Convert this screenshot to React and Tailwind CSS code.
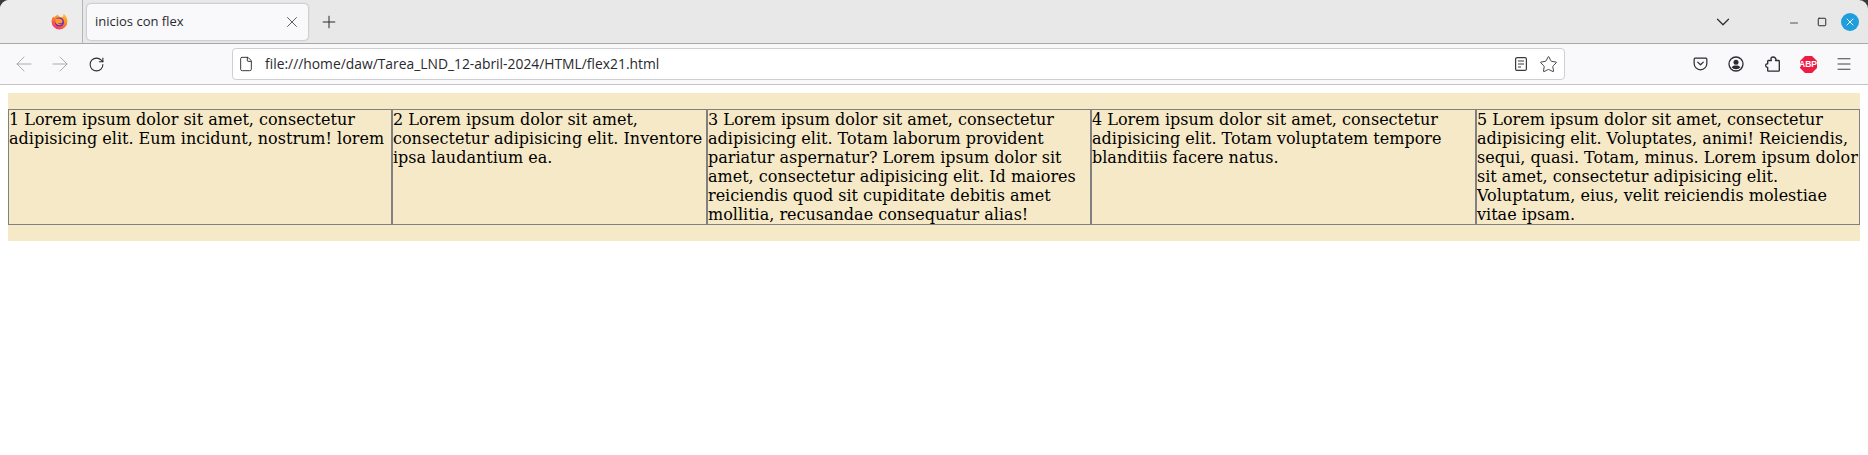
import { ArrowLeft, ArrowRight, RotateCw, X, Plus, ChevronDown, Minus, Square, File, Star, Menu } from "lucide-react";

const CELLS = [
  { w: "w-[384px]", text: "1 Lorem ipsum dolor sit amet, consectetur adipisicing elit. Eum incidunt, nostrum! lorem" },
  { w: "w-[315px]", text: "2 Lorem ipsum dolor sit amet, consectetur adipisicing elit. Inventore ipsa laudantium ea." },
  { w: "w-[384px]", text: "3 Lorem ipsum dolor sit amet, consectetur adipisicing elit. Totam laborum provident pariatur aspernatur? Lorem ipsum dolor sit amet, consectetur adipisicing elit. Id maiores reiciendis quod sit cupiditate debitis amet mollitia, recusandae consequatur alias!" },
  { w: "w-[385px]", text: "4 Lorem ipsum dolor sit amet, consectetur adipisicing elit. Totam voluptatem tempore blanditiis facere natus." },
  { w: "w-[384px]", text: "5 Lorem ipsum dolor sit amet, consectetur adipisicing elit. Voluptates, animi! Reiciendis, sequi, quasi. Totam, minus. Lorem ipsum dolor sit amet, consectetur adipisicing elit. Voluptatum, eius, velit reiciendis molestiae vitae ipsam." },
];

function FirefoxLogo() {
  return (
    <svg width="17" height="17" viewBox="0 0 17 17">
      <defs>
        <linearGradient id="fx" x1="0.8" y1="0" x2="0.2" y2="1">
          <stop offset="0" stopColor="#ffc530" />
          <stop offset="0.5" stopColor="#ff7a2a" />
          <stop offset="1" stopColor="#f0287a" />
        </linearGradient>
      </defs>
      <path d="M12.5 .8c1.6 1.3 3.9 3.4 3.9 7.6a7.9 7.9 0 0 1-15.8.3C.6 6.5 1.2 4.6 2.4 3.4l.7 1.3C4 3.4 5.4 2.2 7.3 1.4c-.4 1.3.4 2 1.7 2.4 1.6.4 3.6 1 3.5-3z" fill="url(#fx)" />
      <circle cx="8.4" cy="9" r="4.6" fill="#6a2bc4" />
      <path d="M4.4 6.2c1.7-.9 4.6-1.1 6.3.2 1.2 1 1.2 3-.2 3.7-1 .5-2.3.2-3.6-.2.8 1.2 2.7 1.7 4.2.7-.8 1.7-3.1 2.1-4.8 1C4.4 10.4 3.6 8 4.4 6.2z" fill="#ff9a2e" />
    </svg>
  );
}

function ReaderIcon() {
  return (
    <svg width="14" height="16" viewBox="0 0 14 16" fill="none" stroke="#3a3a40" strokeWidth="1.2">
      <rect x="1.6" y="1.6" width="10.8" height="12.8" rx="1.5" />
      <path d="M4 5h6M4 8h6M4 11h3" />
    </svg>
  );
}

function PocketIcon() {
  return (
    <svg width="15" height="14" viewBox="0 0 16 15" fill="none" stroke="#2b2b30" strokeWidth="1.3">
      <path d="M2.3 1.2h11.4c.7 0 1.1.4 1.1 1.1v4.6a6.8 6.8 0 0 1-13.6 0V2.3c0-.7.4-1.1 1.1-1.1z" />
      <path d="M5 5.5l3 2.8 3-2.8" strokeLinecap="round" strokeLinejoin="round" />
    </svg>
  );
}

function AccountIcon() {
  return (
    <svg width="16" height="16" viewBox="0 0 16 16">
      <circle cx="8" cy="8" r="7" fill="none" stroke="#2b2b30" strokeWidth="1.3" />
      <circle cx="8" cy="6.2" r="2.5" fill="#2b2b30" />
      <path d="M3.6 11.2c1-1.3 2.6-1.7 4.4-1.7s3.4.4 4.4 1.7c-1 1.2-2.6 2-4.4 2s-3.4-.8-4.4-2z" fill="#2b2b30" />
    </svg>
  );
}

function ExtensionIcon() {
  return (
    <svg width="15" height="16" viewBox="0 0 15 16" fill="none" stroke="#2b2b30" strokeWidth="1.3" strokeLinejoin="round">
      <path d="M8 1c-1.2 0-2 .9-2 2 0 .6.2 1 .4 1.5H3.500a.8.8 0 0 0-.8.8v2.500H2C1 7.800.7 8.700.7 9.500S1.300 11.300 2.200 11.300h.5v3.200c0 .3.200.6.600.6h10.300c.4 0 .7-.3.700-.7V5.300a.8.800 0 0 0-.8-.8h-3c.3-.5.5-.9.500-1.500C10.500 1.900 9.300 1 8 1z" />
    </svg>
  );
}

function AbpBadge() {
  return (
    <div className="relative flex h-[17px] w-[17px] items-center justify-center">
      <svg width="17" height="17" viewBox="0 0 17 17" className="absolute inset-0">
        <path d="M5 0h7l5 5v7l-5 5H5l-5-5V5z" fill="#ee1b44" />
      </svg>
      <span className="relative text-[8.5px] font-bold leading-none text-white font-['Liberation_Sans',sans-serif]">ABP</span>
    </div>
  );
}

function ToolSlot({ children }) {
  return <div className="flex w-[36px] items-center justify-center">{children}</div>;
}

function TabStrip() {
  return (
    <div className="flex h-[43px] items-stretch rounded-t-[9px] bg-[#e8e8e8]">
      <div className="flex w-[83px] items-center justify-end rounded-tl-[9px] border-r border-[#b5b5b5] bg-[#ececec] pr-[14px]">
        <FirefoxLogo />
      </div>
      <div className="ml-[4px] mt-[4px] flex h-[36px] w-[221px] items-center justify-between rounded-[4px] bg-[#f9f9fb] pl-[8px] pr-[7px] shadow-[0_0_2px_rgba(0,0,0,0.4)]">
        <span className="text-[13px] text-[#2a2a2e]">inicios con flex</span>
        <X size={18} strokeWidth={1} color="#2b2b30" />
      </div>
      <div className="ml-[11px] flex items-center">
        <Plus size={20} strokeWidth={1.2} color="#2b2b30" />
      </div>
      <div className="ml-auto flex items-center">
        <ChevronDown size={22} strokeWidth={1.3} color="#2b2b30" />
        <div className="ml-[54px] mt-[3px]"><Minus size={12} strokeWidth={1.6} color="#2b2b30" /></div>
        <div className="ml-[17px]"><Square size={10} strokeWidth={2.4} color="#2b2b30" /></div>
        <div className="ml-[14px] mr-[9px] flex h-[18px] w-[18px] items-center justify-center rounded-full bg-[#1f9ede]">
          <X size={12} strokeWidth={2} color="#ffffff" />
        </div>
      </div>
    </div>
  );
}

function NavBar() {
  return (
    <div className="flex h-[42px] items-center border-y border-b-[#c4c4c4] border-t-[#a8a8a8] bg-[#f9f9fb]">
      <div className="ml-[6px] flex">
        <ToolSlot><ArrowLeft size={24} strokeWidth={0.9} color="#a3a3a6" /></ToolSlot>
        <ToolSlot><ArrowRight size={24} strokeWidth={0.9} color="#a3a3a6" /></ToolSlot>
        <ToolSlot><RotateCw size={17} strokeWidth={1.5} color="#2b2b30" /></ToolSlot>
      </div>
      <div className="ml-[118px] flex h-[32px] w-[1333px] items-center rounded-[4px] border border-[#cfcfd3] bg-white">
        <div className="ml-[5px]"><File size={16} strokeWidth={1.4} color="#2b2b30" /></div>
        <span className="ml-[11px] text-[13.85px] text-[#2a2a2e]">file:///home/daw/Tarea_LND_12-abril-2024/HTML/flex21.html</span>
        <div className="ml-auto flex items-center">
          <ReaderIcon />
          <div className="ml-[11px] mr-[6px]"><Star size={19} strokeWidth={1.1} color="#2b2b30" /></div>
        </div>
      </div>
      <div className="ml-auto flex items-center pr-[6px]">
        <ToolSlot><PocketIcon /></ToolSlot>
        <ToolSlot><AccountIcon /></ToolSlot>
        <ToolSlot><ExtensionIcon /></ToolSlot>
        <ToolSlot><AbpBadge /></ToolSlot>
        <ToolSlot><Menu size={18} strokeWidth={1.2} color="#2b2b30" /></ToolSlot>
      </div>
    </div>
  );
}

export default function App() {
  return (
    <div className="h-[455px] overflow-hidden bg-white">
      <div className="bg-[#3a3a3a] font-['Open_Sans',sans-serif]">
        <TabStrip />
        <NavBar />
      </div>
      <div className="mx-[8px] mt-[8px] flex bg-[#f6e9c7] py-[16px] font-['DejaVu_Serif',serif] text-[16px] leading-[19px] text-black">
        {CELLS.map((c) => (
          <div key={c.text} className={`${c.w} border border-[#808080]`}>{c.text}</div>
        ))}
      </div>
    </div>
  );
}
